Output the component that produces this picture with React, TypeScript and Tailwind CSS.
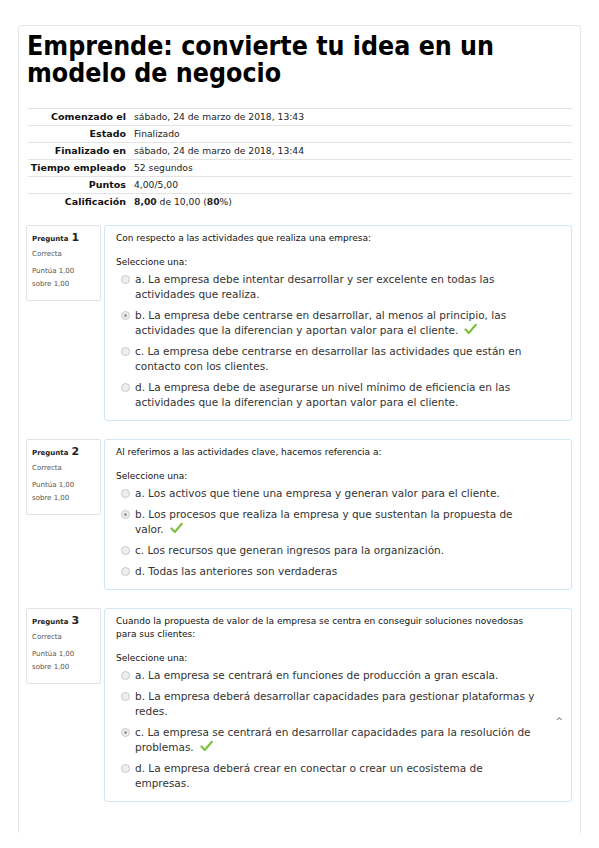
import React from "react";

const F = "font-['DejaVu_Sans',Verdana,sans-serif]";

function Check() {
  return (
    <svg width="13" height="12" viewBox="0 0 13 12" className="inline-block align-[-1px] ml-[6px]">
      <path d="M1.5 6.5 L4.8 10 L11.8 1.8" fill="none" stroke="#80c142" strokeWidth="2.2" strokeLinecap="round" strokeLinejoin="round" />
    </svg>
  );
}

function Radio({ checked }: { checked?: boolean }) {
  return (
    <span className="mt-[3px] flex h-[9px] w-[9px] shrink-0 items-center justify-center rounded-full border border-[#c9c9c9] bg-[#eeeeee]">
      {checked && <span className="h-[3px] w-[3px] rounded-full bg-[#9a9a9a]" />}
    </span>
  );
}

type Opt = { t: string[]; checked?: boolean };

function Question({
  n,
  text,
  opts,
  caret,
}: {
  n: number;
  text: string[];
  opts: Opt[];
  caret?: boolean;
}) {
  return (
    <div className="flex items-start gap-[3px]">
      <div className="ml-[-1px] w-[75px] shrink-0 rounded-[2px] border border-[#e3e3e3] bg-white px-[5px] pt-[5px] pb-[9px]">
        <div className="flex items-baseline gap-[3px] leading-[13px]">
          <span className="text-[7px] font-bold text-[#222]">Pregunta</span>
          <span className="text-[11px] font-bold text-[#222]">{n}</span>
        </div>
        <div className="mt-[3px] text-[7px] leading-[10px] text-[#555]">Correcta</div>
        <div className="mt-[6px] text-[7px] leading-[13px] text-[#555]">
          Puntúa 1,00
          <br />
          sobre 1,00
        </div>
      </div>
      <div className="relative flex-1 rounded-[3px] border border-[#cfe8f1] bg-white pt-[6px] pr-[10px] pb-[10px] pl-[11px]">
        <div className="whitespace-nowrap text-[9px] leading-[13px] text-[#111]">
          {text.map((l, i) => (
            <div key={i}>{l}</div>
          ))}
        </div>
        <div className="mt-[11px] text-[9px] leading-[13px] text-[#111]">Seleccione una:</div>
        <div className="mt-[3px] flex flex-col gap-[6px] pl-[5px]">
          {opts.map((o, i) => (
            <div key={i} className="flex items-start gap-[5px]">
              <Radio checked={o.checked} />
              <div className="whitespace-nowrap text-[10.5px] leading-[15px] text-[#333]">
                {o.t.map((l, j) => (
                  <div key={j}>
                    {l}
                    {o.checked && j === o.t.length - 1 && <Check />}
                  </div>
                ))}
              </div>
            </div>
          ))}
        </div>
        {caret && (
          <span className="absolute right-[8px] top-[108px] text-[9px] leading-[9px] text-[#666]">^</span>
        )}
      </div>
    </div>
  );
}

const rows: [string, React.ReactNode][] = [
  ["Comenzado el", "sábado, 24 de marzo de 2018, 13:43"],
  ["Estado", "Finalizado"],
  ["Finalizado en", "sábado, 24 de marzo de 2018, 13:44"],
  ["Tiempo empleado", "52 segundos"],
  ["Puntos", "4,00/5,00"],
  [
    "Calificación",
    <span>
      <b>8,00</b> de 10,00 (<b>80</b>%)
    </span>,
  ],
];

export default function App() {
  return (
    <div className={`${F} min-h-[848px] bg-white pt-[25px] px-[18px]`}>
      <div className="h-[808px] rounded-t-[4px] border-x border-t border-[#e6e6e6] bg-white px-[8px] pt-[6px]">
        <h1 className="font-['DejaVu_Sans_Condensed','DejaVu_Sans',sans-serif] text-[26.5px] font-bold leading-[27px] text-black">
          Emprende: convierte tu idea en un
          <br />
          modelo de negocio
        </h1>
        <div className="mt-[22px] ml-[1px]">
          {rows.map(([k, v], i) => (
            <div key={i} className="flex h-[17px] items-center border-t border-[#e4e4e4]">
              <div className="w-[98px] shrink-0 text-right text-[9.5px] font-bold text-[#111]">{k}</div>
              <div className="pl-[8px] text-[9.2px] text-[#222]">{v}</div>
            </div>
          ))}
        </div>
        <div className="mt-[15px] flex flex-col gap-[18px]">
          <Question
            n={1}
            text={["Con respecto a las actividades que realiza una empresa:"]}
            opts={[
              { t: ["a. La empresa debe intentar desarrollar y ser excelente en todas las", "actividades que realiza."] },
              {
                t: [
                  "b. La empresa debe centrarse en desarrollar, al menos al principio, las",
                  "actividades que la diferencian y aportan valor para el cliente.",
                ],
                checked: true,
              },
              { t: ["c. La empresa debe centrarse en desarrollar las actividades que están en", "contacto con los clientes."] },
              {
                t: [
                  "d. La empresa debe de asegurarse un nivel mínimo de eficiencia en las",
                  "actividades que la diferencian y aportan valor para el cliente.",
                ],
              },
            ]}
          />
          <Question
            n={2}
            text={["Al referimos a las actividades clave, hacemos referencia a:"]}
            opts={[
              { t: ["a. Los activos que tiene una empresa y generan valor para el cliente."] },
              { t: ["b. Los procesos que realiza la empresa y que sustentan la propuesta de", "valor."], checked: true },
              { t: ["c. Los recursos que generan ingresos para la organización."] },
              { t: ["d. Todas las anteriores son verdaderas"] },
            ]}
          />
          <Question
            n={3}
            caret
            text={[
              "Cuando la propuesta de valor de la empresa se centra en conseguir soluciones novedosas",
              "para sus clientes:",
            ]}
            opts={[
              { t: ["a. La empresa se centrará en funciones de producción a gran escala."] },
              { t: ["b. La empresa deberá desarrollar capacidades para gestionar plataformas y", "redes."] },
              {
                t: ["c. La empresa se centrará en desarrollar capacidades para la resolución de", "problemas."],
                checked: true,
              },
              { t: ["d. La empresa deberá crear en conectar o crear un ecosistema de", "empresas."] },
            ]}
          />
        </div>
      </div>
    </div>
  );
}
